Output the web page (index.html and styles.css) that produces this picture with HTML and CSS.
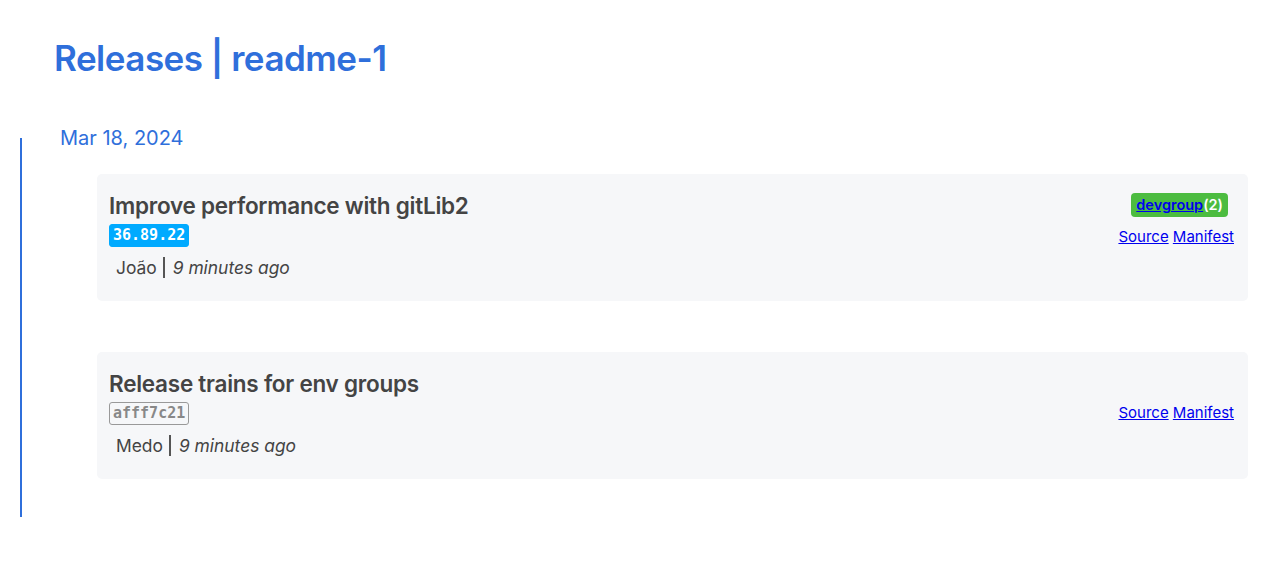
FILE: index.html
```html
<!DOCTYPE html>
<html>
<head>
<meta charset="utf-8">
<link rel="stylesheet" href="styles.css">
</head>
<body>
<main class="page">
  <h1 class="page-title">Releases | readme-1</h1>
  <section class="timeline">
    <div class="date">Mar 18, 2024</div>
    <div class="cards">
      <article class="card">
        <div class="card-main">
          <h2 class="card-title">Improve performance with gitLib2</h2>
          <span class="version version-tag">36.89.22</span>
          <div class="meta"><span class="author">João</span><span class="time">9 minutes ago</span></div>
        </div>
        <div class="card-side">
          <span class="group"><a href="#">devgroup</a>(2)</span>
          <div class="links"><a href="#">Source</a> <a href="#">Manifest</a></div>
        </div>
      </article>
      <article class="card">
        <div class="card-main">
          <h2 class="card-title">Release trains for env groups</h2>
          <span class="version version-hash">afff7c21</span>
          <div class="meta"><span class="author">Medo</span><span class="time">9 minutes ago</span></div>
        </div>
        <div class="card-side card-side-plain">
          <div class="links"><a href="#">Source</a> <a href="#">Manifest</a></div>
        </div>
      </article>
    </div>
  </section>
</main>
</body>
</html>
```
FILE: styles.css
```css
html, body {
  margin: 0;
  padding: 0;
  background: #fff;
}
body {
  font-family: Inter, "Noto Sans", sans-serif;
}
.page {
  padding: 36px 0 0 20px;
}
.page-title {
  margin: 0 0 0 34px;
  font-size: 35px;
  font-weight: 600;
  color: #2f6fdb;
  line-height: 44px;
  letter-spacing: -0.5px;
}
.timeline {
  display: flow-root;
  margin-top: 58px;
  border-left: 2px solid #2f6fdb;
  width: 1226px;
  padding-bottom: 38px;
}
.date {
  margin: -12px 0 0 38px;
  font-size: 20px;
  color: #2f6fdb;
  line-height: 24px;
}
.cards {
  margin: 24px 0 0 75px;
  display: flex;
  flex-direction: column;
  gap: 51px;
}
.card {
  background: #f6f7f9;
  border-radius: 5px;
  height: 127px;
  display: flex;
  justify-content: space-between;
  box-sizing: border-box;
  padding: 18px 14px 0 12px;
}
.card-title {
  margin: 0;
  font-size: 22.5px;
  font-weight: 600;
  color: #444;
  line-height: 28px;
  letter-spacing: -0.25px;
}
.version {
  display: inline-block;
  font-family: "DejaVu Sans Mono", monospace;
  font-weight: bold;
  font-size: 15px;
  line-height: 19px;
  padding: 1px 3px;
  border-radius: 3px;
  margin-top: 4px;
}
.version-tag {
  background: #00aaff;
  color: #fff;
  border: 1px solid #00aaff;
}
.version-hash {
  background: #f6f7f9;
  color: #888;
  border: 1px solid #999;
}
.meta {
  margin: 8px 0 0 7px;
  font-size: 17.4px;
  color: #444;
  line-height: 26px;
}
.author {
  padding-right: 6px;
  border-right: 2px solid #555;
  margin-right: 8px;
}
.time {
  font-style: italic;
}
.card-side {
  display: flex;
  flex-direction: column;
  align-items: flex-end;
  padding-top: 1px;
}
.card-side-plain {
  padding-top: 23px;
}
.group {
  background: #4cbc40;
  color: #fff;
  font-weight: 600;
  font-size: 14.5px;
  line-height: 20px;
  padding: 2px 5px;
  border-radius: 4px;
  margin-right: 6px;
}
.group a {
  color: #0000ee;
}
.links {
  margin-top: 10px;
  font-size: 15px;
  line-height: 20px;
}
.links a {
  color: #0000ee;
}
```
